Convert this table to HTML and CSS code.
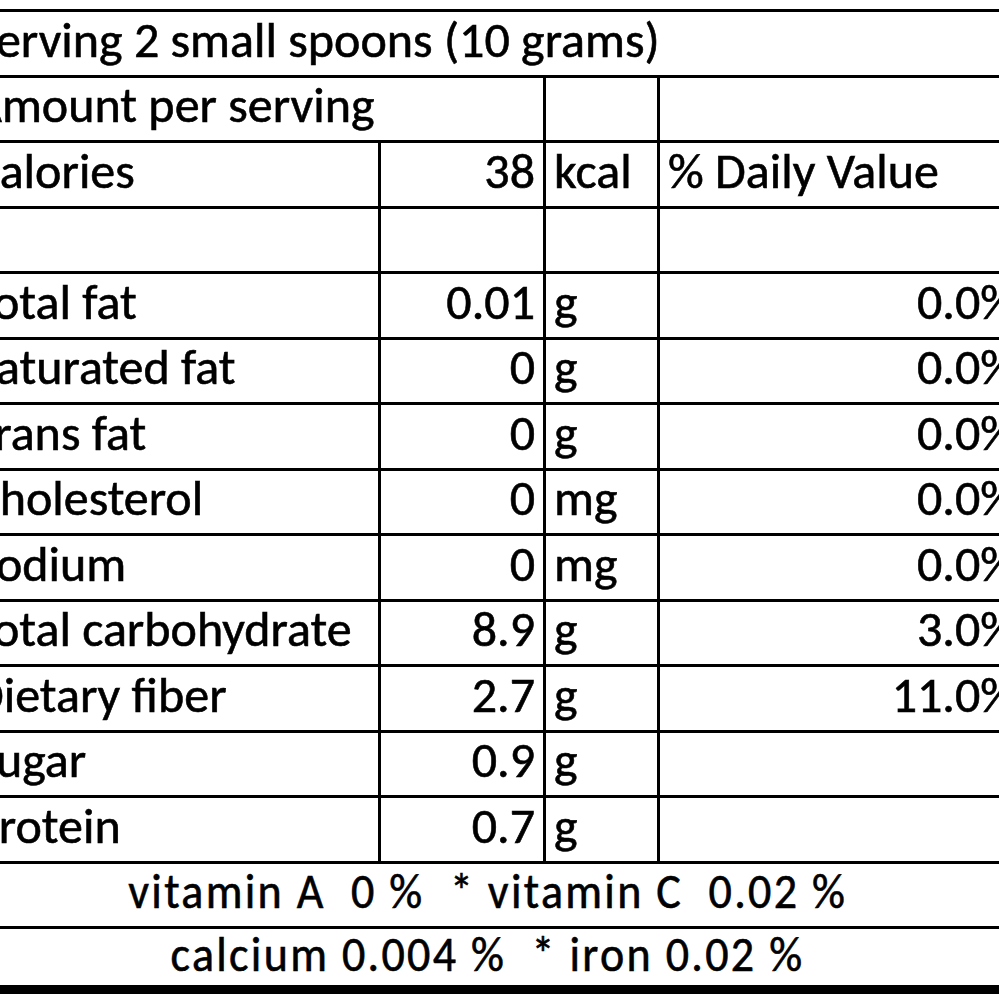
FILE: index.html
```html
<!DOCTYPE html>
<html lang="en">
<head>
<meta charset="utf-8">
<title>Nutrition facts</title>
<link rel="stylesheet" href="styles.css">
</head>
<body>
<div class="sheet">
  <table class="facts">
    <colgroup>
      <col class="c-label">
      <col class="c-value">
      <col class="c-unit">
      <col class="c-dv">
    </colgroup>
    <tbody>
      <tr><td colspan="4">Serving 2 small spoons (10 grams)</td></tr>
      <tr><td colspan="2">Amount per serving</td><td></td><td></td></tr>
      <tr><td>Calories</td><td class="num">38</td><td>kcal</td><td>% Daily Value</td></tr>
      <tr><td></td><td></td><td></td><td></td></tr>
      <tr><td>Total fat</td><td class="num">0.01</td><td>g</td><td class="num">0.0%</td></tr>
      <tr><td>Saturated fat</td><td class="num">0</td><td>g</td><td class="num">0.0%</td></tr>
      <tr><td>Trans fat</td><td class="num">0</td><td>g</td><td class="num">0.0%</td></tr>
      <tr><td>Cholesterol</td><td class="num">0</td><td>mg</td><td class="num">0.0%</td></tr>
      <tr><td>Sodium</td><td class="num">0</td><td>mg</td><td class="num">0.0%</td></tr>
      <tr><td>Total carbohydrate</td><td class="num">8.9</td><td>g</td><td class="num">3.0%</td></tr>
      <tr><td>Dietary fiber</td><td class="num">2.7</td><td>g</td><td class="num">11.0%</td></tr>
      <tr><td>Sugar</td><td class="num">0.9</td><td>g</td><td></td></tr>
      <tr><td>Protein</td><td class="num">0.7</td><td>g</td><td></td></tr>
      <tr><td colspan="4" class="center"><span class="narrow">vitamin A&nbsp; 0 %&nbsp; * vitamin C&nbsp; 0.02 %</span></td></tr>
      <tr class="last"><td colspan="4" class="center"><span class="narrow">calcium 0.004 %&nbsp; * iron 0.02 %</span></td></tr>
    </tbody>
  </table>
</div>
</body>
</html>
```

FILE: styles.css
```css
html, body {
  margin: 0;
  padding: 0;
  background: #ffffff;
}

.sheet {
  width: 999px;
  height: 999px;
  overflow: hidden;
  padding-top: 9px;
  box-sizing: border-box;
}

.facts {
  margin-left: -38px;
  border-collapse: collapse;
  table-layout: fixed;
  width: 1062px;
  font-family: Carlito, Calibri, Lato, "Open Sans", sans-serif;
  font-size: 50px;
  color: #000;
  -webkit-text-stroke: 0.6px #000;
}

.c-label { width: 416px; }
.c-value { width: 165px; }
.c-unit { width: 114px; }
.c-dv { width: 367px; }

.facts tr {
  height: 65.5px;
}

.facts td {
  border: 3px solid #000;
  padding: 0 8px 10px 8px;
  vertical-align: bottom;
  line-height: 50px;
  white-space: nowrap;
  overflow: hidden;
}

.facts td.num {
  text-align: right;
}

.facts td.center {
  text-align: center;
  padding-right: 22px;
}

.narrow {
  display: inline-block;
  transform: scaleX(0.92);
  letter-spacing: 2.5px;
}

.facts tr.last {
  height: 58.5px;
}

.facts tr.last td {
  border-bottom: 9px solid #000;
  padding-bottom: 6px;
}
```
